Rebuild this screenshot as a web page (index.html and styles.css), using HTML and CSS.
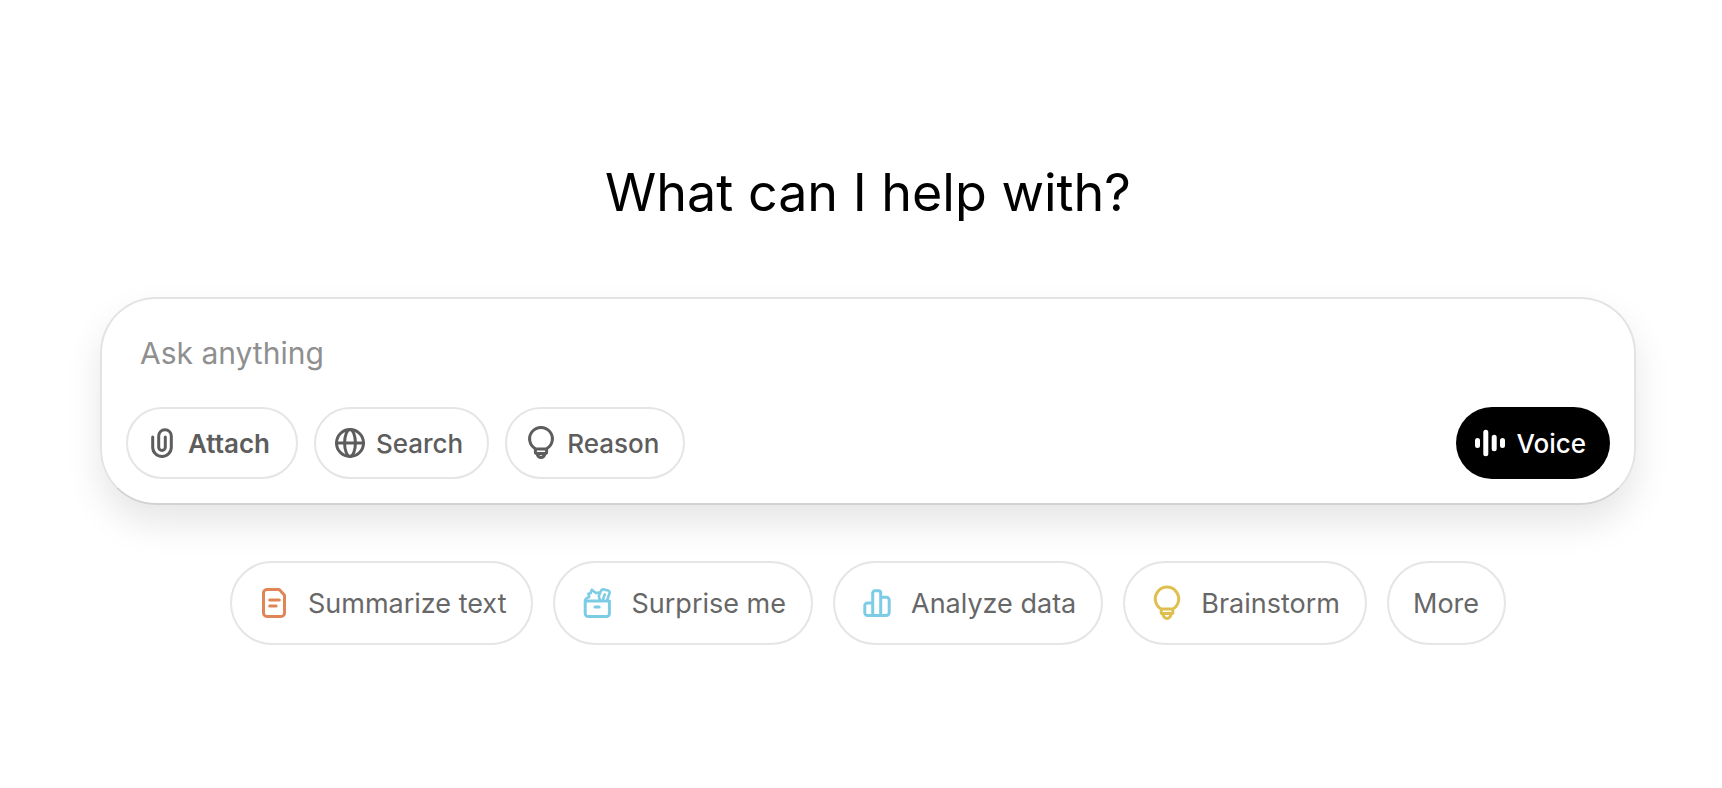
FILE: index.html
```html
<!doctype html>
<html lang="en">
<head>
    <meta charset="UTF-8">
    <title>What can I help with?</title>
    <meta name="viewport" content="width=device-width, initial-scale=1">
    <link rel="stylesheet" href="styles.css">
</head>
<body>
    <main>
        <h1>What can I help with?</h1>

        <form class="composer">
            <input type="text" class="prompt" name="prompt" placeholder="Ask anything" aria-label="Ask anything">
            <div class="toolbar">
                <button type="button" class="tool attach">
                    <svg class="icon" viewBox="0 0 36 36"><path d="M8.7 12v10.2a9.3 9.3 0 0 0 18.6 0V11a6.3 6.3 0 0 0-12.6 0v11.2a3.3 3.3 0 0 0 6.6 0V12"/></svg>
                    Attach
                </button>
                <button type="button" class="tool">
                    <svg class="icon" viewBox="0 0 36 36"><circle cx="18" cy="18" r="13.5"/><ellipse cx="18" cy="18" rx="5.4" ry="13.5"/><path d="M4.5 18h27"/></svg>
                    Search
                </button>
                <button type="button" class="tool">
                    <svg class="icon" viewBox="0 0 36 36"><path d="M12.6 23.9a11.4 11.4 0 1 1 10.8 0M12.4 23.9h11.2v3.3a1.2 1.2 0 0 1-1.2 1.2h-8.8a1.2 1.2 0 0 1-1.2-1.2zM14 28.6c.6 2.6 2 4 4 4s3.4-1.4 4-4"/></svg>
                    Reason
                </button>
                <button type="button" class="voice">
                    <svg class="icon" viewBox="0 0 36 36"><path d="M5.5 15.5v5M13.8 7.2v21.6M22.2 12.2v11.6M30.5 15.5v5"/></svg>
                    Voice
                </button>
            </div>
        </form>

        <div class="suggestions">
            <button type="button" class="chip">
                <svg class="icon orange" viewBox="0 0 36 36"><path d="M11 4.5h12.2l5.3 5.8V28a3.5 3.5 0 0 1-3.5 3.5H11A3.5 3.5 0 0 1 7.5 28V8A3.5 3.5 0 0 1 11 4.5zM13.7 15h9.6M13.7 21h6.4"/></svg>
                Summarize text
            </button>
            <button type="button" class="chip">
                <svg class="icon blue" viewBox="0 0 36 36"><path d="M6.2 16h24.2v12.5a3 3 0 0 1-3 3H9.2a3 3 0 0 1-3-3zM16 21.9h4.2"/><path class="fine" d="M6.2 15.4c0-1.9 1.2-2.5 4-3.4L9.4 8.8l2.2-.6 1.2-3.4 4 3.2 4.6-.6-1.6 3.6 1 4M22 5.8c.8-1.4 1.8-1.6 3-1.3l4 1c1.4.4 2 1.4 1.5 2.8L28.2 15M25.8 9.4l-2 5.4"/></svg>
                Surprise me
            </button>
            <button type="button" class="chip">
                <svg class="icon blue" viewBox="0 0 36 36"><path d="M13.7 30.5V8a2.2 2.2 0 0 1 2.2-2.2h3.6A2.2 2.2 0 0 1 21.7 8v22.5M13.7 18H8.5a2.7 2.7 0 0 0-2.7 2.7v7.1a2.7 2.7 0 0 0 2.7 2.7h18.8a2.9 2.9 0 0 0 2.9-2.9V15.2a2.9 2.9 0 0 0-2.9-2.9h-5.6"/></svg>
                Analyze data
            </button>
            <button type="button" class="chip">
                <svg class="icon yellow" viewBox="0 0 36 36"><path d="M12.6 24.2a11.7 11.7 0 1 1 10.8 0M12.2 24h11.6v3.4a1.2 1.2 0 0 1-1.2 1.2h-9.2a1.2 1.2 0 0 1-1.2-1.2zM13.8 28.8c.6 3 2.2 4.6 4.2 4.6s3.6-1.6 4.2-4.6"/></svg>
                Brainstorm
            </button>
            <button type="button" class="chip">More</button>
        </div>
    </main>
</body>
</html>
```
FILE: styles.css
```css
body {
    margin: 0;
    background-color: #fff;
    font-family: Inter, "Liberation Sans", sans-serif;
}
main {
    padding: 161px 86px 40px 100px;
}
h1 {
    margin: 0 0 72px;
    font-size: 52px;
    font-weight: 400;
    line-height: 64px;
    text-align: center;
    color: #000;
}
button {
    display: flex;
    align-items: center;
    box-sizing: border-box;
    border: 2px solid #e5e5e5;
    border-radius: 42px;
    background-color: #fff;
    font-family: inherit;
    white-space: nowrap;
    cursor: pointer;
}
.icon {
    width: 36px;
    height: 36px;
    flex: none;
    fill: none;
    stroke: currentColor;
    stroke-width: 3;
    stroke-linecap: round;
    stroke-linejoin: round;
}
.fine {
    stroke-width: 2.6;
}
.composer {
    padding: 24px;
    border: 2px solid #e3e3e3;
    border-bottom-color: #d2d2d2;
    border-radius: 56px;
    box-shadow: 0 18px 36px rgba(0, 0, 0, 0.1);
}
.prompt {
    display: block;
    box-sizing: border-box;
    width: 100%;
    height: 64px;
    margin-bottom: 20px;
    padding: 0 14px 4px;
    border: none;
    outline: none;
    background: none;
    font-family: inherit;
    font-size: 30px;
    color: #0d0d0d;
}
.prompt::placeholder {
    color: #8f8f8f;
}
.toolbar {
    display: flex;
    gap: 16px;
}
.tool, .voice {
    gap: 8px;
    height: 72px;
    padding: 0 24px 0 16px;
    font-size: 26px;
    font-weight: 500;
    color: #5d5d5d;
}
.attach {
    padding-right: 26px;
    font-weight: 600;
}
.voice {
    margin-left: auto;
    border: none;
    background-color: #000;
    color: #fff;
}
.voice .icon {
    stroke-width: 5;
}
.suggestions {
    display: flex;
    flex-wrap: wrap;
    justify-content: center;
    gap: 20px;
    margin-top: 56px;
}
.chip {
    gap: 16px;
    height: 84px;
    padding: 0 25px 0 24px;
    font-size: 27px;
    font-weight: 400;
    color: #676767;
}
.orange {
    color: #e08556;
}
.blue {
    color: #7dcce6;
}
.yellow {
    color: #dfc04f;
}
```
